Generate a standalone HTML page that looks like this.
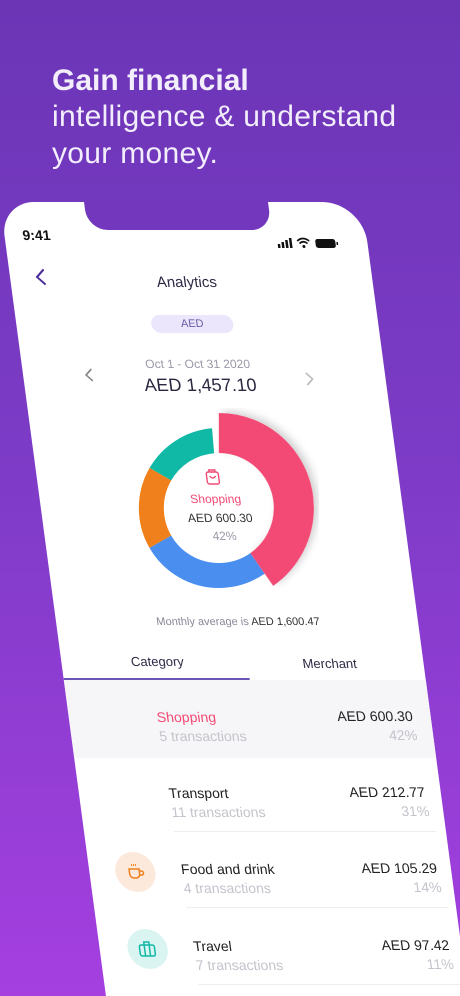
<!DOCTYPE html>
<html style="width:460px;height:996px;overflow:hidden"><head><meta charset="utf-8">
<style>
*{margin:0;padding:0;box-sizing:border-box}
body{width:460px;height:996px;overflow:hidden;position:relative;font-family:"Liberation Sans",sans-serif;background:linear-gradient(180deg,#6b35b6 0%,#7c3bc6 45%,#a53fe0 100%)}
.h{position:absolute;left:52px;color:#f3eefc;font-size:30px;line-height:37px;letter-spacing:0.3px}
.phone{position:absolute;left:0;top:202px;width:362px;height:794px;overflow:hidden;background:#fff;border-radius:34px 40px 0 0;transform-origin:0 0;transform:skewX(7.6deg)}
.notch{position:absolute;left:84px;top:-4px;width:184px;height:32px;background:#7337bd;border-radius:0 0 20px 20px}
.a{position:absolute;white-space:nowrap}
.c{transform:translateX(-50%)}
.r{text-align:right}
.t{font-size:14px}
</style></head><body>
<div class="h" style="top:62px;font-weight:bold;letter-spacing:0">Gain financial</div>
<div class="h" style="top:98px">intelligence &amp; understand</div>
<div class="h" style="top:135px">your money.</div>

<div class="phone">
  <div class="notch"></div>
  <div class="a" style="left:18px;top:25px;font-size:14px;font-weight:bold;color:#111">9:41</div>
  <div class="a" style="left:272px;top:34px;width:66px;height:12px">
    <svg width="66" height="12" viewBox="0 0 66 12"><rect x="0" y="7" width="2.5" height="4" fill="#111"/><rect x="4" y="5" width="2.5" height="6" fill="#111"/><rect x="8" y="3" width="2.5" height="8" fill="#111"/><rect x="12" y="1" width="2.5" height="10" fill="#111"/>
    <path d="M20 4 Q26 -1 32 4 M22 6.5 Q26 3 30 6.5" stroke="#111" stroke-width="1.7" fill="none"/><circle cx="26" cy="9.5" r="1.5" fill="#111"/>
    <rect x="38" y="2" width="20" height="9" rx="2.5" fill="#111"/><rect x="59" y="5" width="1.5" height="3" fill="#111"/></svg>
  </div>
  <div class="a" style="left:24px;top:66px"><svg width="12" height="18"><path d="M10 2 L3 9 L10 16" stroke="#4b2e9a" stroke-width="2" fill="none" stroke-linecap="round"/></svg></div>
  <div class="a c" style="left:176px;top:72px;font-size:15px;color:#2d2a45">Analytics</div>
  <div class="a c" style="left:176px;top:113px;width:82px;height:18px;border-radius:9px;background:#ebe6fb;color:#6a5aa8;font-size:11px;text-align:center;line-height:18px">AED</div>
  <div class="a" style="left:60px;top:164px"><svg width="12" height="18"><path d="M9 3 L3 9 L9 15" stroke="#888" stroke-width="1.6" fill="none"/></svg></div>
  <div class="a" style="left:280px;top:168px"><svg width="12" height="18"><path d="M3 3 L9 9 L3 15" stroke="#bbb" stroke-width="1.6" fill="none"/></svg></div>
  <div class="a c" style="left:176px;top:155px;font-size:12px;color:#9a98a8">Oct 1 - Oct 31 2020</div>
  <div class="a c" style="left:176px;top:173px;font-size:18px;color:#2a2840">AED 1,457.10</div>

  <div class="a" style="left:78px;top:206px;width:200px;height:200px;transform:skewX(-7.6deg);transform-origin:50% 50%">
    <svg width="200" height="200" viewBox="-100 -100 200 200">
      <defs><filter id="sh" x="-30%" y="-30%" width="160%" height="160%"><feDropShadow dx="2" dy="4" stdDeviation="4" flood-opacity="0.18"/></filter></defs>
      <g transform="rotate(-90)" fill="none">
        <circle r="67.5" stroke="#4a8ff0" stroke-width="25" stroke-dasharray="111.9 424.1" stroke-dashoffset="-170.8"/>
        <circle r="67.5" stroke="#f0801b" stroke-width="25" stroke-dasharray="70.7 424.1" stroke-dashoffset="-282.7"/>
        <circle r="67.5" stroke="#10b8a6" stroke-width="25" stroke-dasharray="64.8 424.1" stroke-dashoffset="-353.4"/>
        <circle r="75" stroke="#f24a74" stroke-width="40" stroke-dasharray="196.3 471.2" stroke-dashoffset="6.5" filter="url(#sh)"/>
      </g>
    </svg>
  </div>
  <div class="a c" style="left:176px;top:266px"><svg width="16" height="18"><rect x="2" y="4" width="12" height="12" rx="2" stroke="#f24a74" stroke-width="1.4" fill="none"/><path d="M5 4 V2 H11 V4 M5 8 Q8 12 11 8" stroke="#f24a74" stroke-width="1.4" fill="none"/></svg></div>
  <div class="a c" style="left:176px;top:290px;font-size:12px;color:#f24a74">Shopping</div>
  <div class="a c" style="left:178px;top:309px;font-size:12px;color:#333">AED 600.30</div>
  <div class="a c" style="left:180px;top:327px;font-size:12px;color:#9a98a8">42%</div>

  <div class="a c" style="left:182px;top:414px;font-size:11px;color:#8a8898">Monthly average is <span style="color:#333">AED 1,600.47</span></div>
  <div class="a c" style="left:96px;top:452px;font-size:13px;color:#2d2a45">Category</div>
  <div class="a c" style="left:268px;top:454px;font-size:13px;color:#2d2a45">Merchant</div>
  <div class="a" style="left:0;top:476px;width:186px;height:2px;background:#6a55b5"></div>
  <div class="a" style="left:0;top:478px;width:372px;height:78px;background:#f6f6f8"></div>

  <div class="a t" style="left:88px;top:507px;color:#f24a74">Shopping</div>
  <div class="a t" style="left:88px;top:526px;color:#c4c3cc">5 transactions</div>
  <div class="a r t" style="right:18px;top:506px;color:#222">AED 600.30</div>
  <div class="a r t" style="right:16px;top:525px;color:#c4c3cc">42%</div>

  <div class="a t" style="left:90px;top:583px;color:#222">Transport</div>
  <div class="a t" style="left:90px;top:602px;color:#c4c3cc">11 transactions</div>
  <div class="a r t" style="right:16px;top:582px;color:#222">AED 212.77</div>
  <div class="a r t" style="right:14px;top:601px;color:#c4c3cc">31%</div>
  <div class="a" style="left:90px;top:629px;width:262px;height:1px;background:#eee"></div>

  <div class="a" style="left:26px;top:650px;width:40px;height:40px;border-radius:50%;background:#fde9dc"></div>
  <div class="a" style="left:37px;top:660px"><svg width="20" height="20"><path d="M3 7 H13 V12 A4 4 0 0 1 9 16 H7 A4 4 0 0 1 3 12 Z M13 9 H15 A2 2 0 0 1 15 13 H13" stroke="#f0801b" stroke-width="1.5" fill="none"/><path d="M6 2 V4 M8 2 V4 M10 2 V4" stroke="#f0801b" stroke-width="1"/></svg></div>
  <div class="a t" style="left:92px;top:659px;color:#222">Food and drink</div>
  <div class="a t" style="left:92px;top:678px;color:#c4c3cc">4 transactions</div>
  <div class="a r t" style="right:14px;top:658px;color:#222">AED 105.29</div>
  <div class="a r t" style="right:12px;top:677px;color:#c4c3cc">14%</div>
  <div class="a" style="left:92px;top:705px;width:262px;height:1px;background:#eee"></div>

  <div class="a" style="left:28px;top:727px;width:40px;height:40px;border-radius:50%;background:#d9f4f1"></div>
  <div class="a" style="left:38px;top:737px"><svg width="20" height="20"><rect x="2" y="6" width="15" height="11" rx="2" stroke="#10b8a6" stroke-width="1.5" fill="none"/><path d="M7 6 V3 H12 V6 M7 6 V17 M12 6 V17" stroke="#10b8a6" stroke-width="1.5" fill="none"/></svg></div>
  <div class="a t" style="left:94px;top:736px;color:#222">Travel</div>
  <div class="a t" style="left:94px;top:755px;color:#c4c3cc">7 transactions</div>
  <div class="a r t" style="right:12px;top:735px;color:#222">AED 97.42</div>
  <div class="a r t" style="right:10px;top:754px;color:#c4c3cc">11%</div>
  <div class="a" style="left:94px;top:782px;width:262px;height:1px;background:#eee"></div>
</div>
</body></html>
